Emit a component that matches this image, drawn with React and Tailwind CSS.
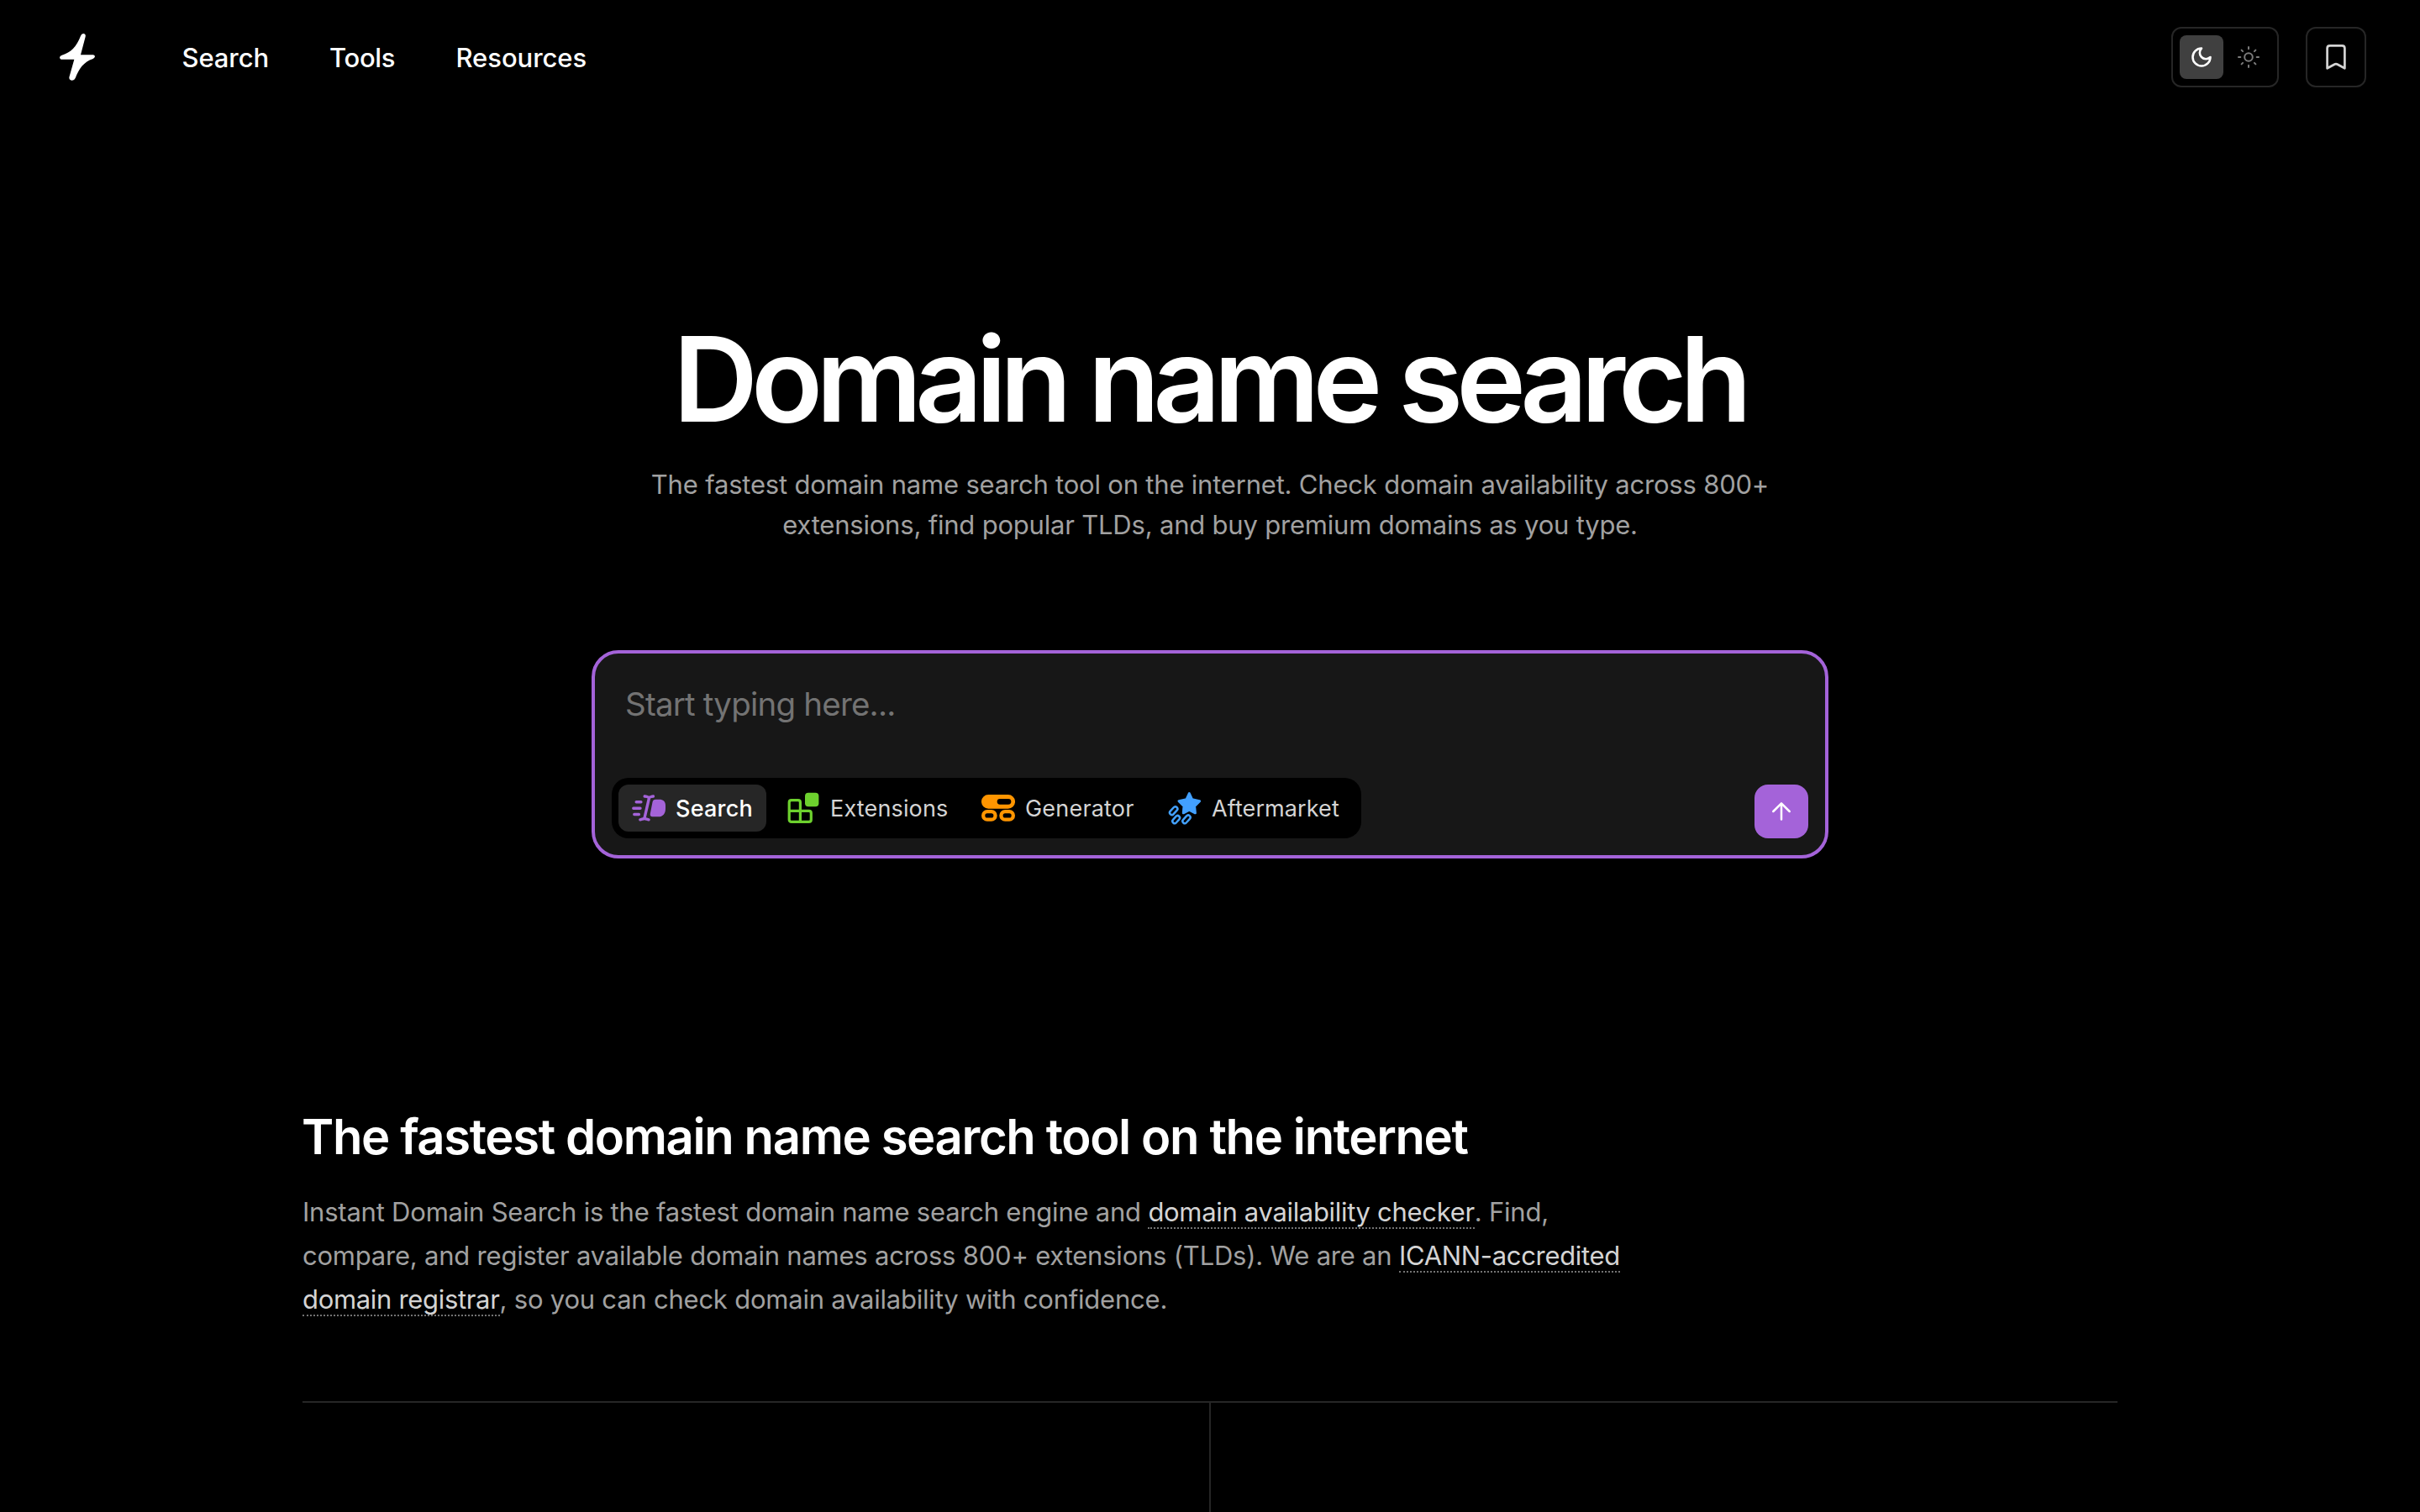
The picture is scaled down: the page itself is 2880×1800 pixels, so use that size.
import React, { useState } from "react";

const navLinks = [
  { label: "Search", className: "w-[175.5px] tracking-[-0.09px]" },
  { label: "Tools", className: "w-[150.5px] tracking-[-0.3px]" },
  { label: "Resources", className: "tracking-[-0.06px]" },
];

function Logo() {
  return (
    <svg viewBox="0 0 192 228" className="h-[76px] w-16" fill="#fff">
      <path d="M108 38Q111 29 119 30Q127 32 125 41L108 106H153Q159 107 159 112Q158 117 152 120C119 131 102 155 89 189Q85 198 76 197Q66 195 67 186L85 122H38Q33 121 33 115Q34 109 41 107C74 96 92 78 108 38Z" />
    </svg>
  );
}

function MoonIcon() {
  return (
    <svg viewBox="0 0 24 24" className="h-7 w-7" fill="none" stroke="#fff" strokeWidth="2.2" strokeLinecap="round" strokeLinejoin="round">
      <path d="M12 3a6 6 0 0 0 9 9 9 9 0 1 1-9-9Z" />
    </svg>
  );
}

function SunIcon() {
  return (
    <svg viewBox="-14 -14 28 28" className="h-7 w-7" fill="none" stroke="#7c7c7c" strokeWidth="2" strokeLinecap="round">
      <circle r="4.8" />
      <path d="M0-12V-9.7M0 12V9.7M-12 0H-9.7M12 0H9.7M-8.4-8.4L-6.9-6.9M8.4-8.4L6.9-6.9M-8.4 8.4L-6.9 6.9M8.4 8.4L6.9 6.9" />
    </svg>
  );
}

function BookmarkIcon() {
  return (
    <svg viewBox="0 0 24 30" className="h-[30px] w-6" fill="none" stroke="#d4d4d4" strokeWidth="2.7" strokeLinejoin="round">
      <path d="M4.7 1.4H19.3Q22.4 1.4 22.4 4.5V28.3L14 23.7Q12 22.6 10 23.7L1.6 28.3V4.5Q1.6 1.4 4.7 1.4Z" />
    </svg>
  );
}

function SearchIcon() {
  return (
    <svg viewBox="0 0 40 40" className="h-10 w-10" fill="none" stroke="#a463d9" strokeWidth="3.4" strokeLinecap="round" strokeLinejoin="round">
      <path d="M5.2 12.7H10.9M1.8 20.3H10M2.8 27.5H8.4" />
      <path d="M15.2 6L17.8 6.4Q20.5 8 23.2 6.4L25.4 6M20.5 8L15 31.8M9.9 33.8L12.3 33.2Q15 31.8 17.6 33.2L20 33.8" />
      <path d="M28.3 9.7H32.6C37.2 9.7 40 12.2 40 16.5V20.5C40 26.8 37 30.3 31.5 30.3H24.5C22.3 30.3 21.4 28.8 21.8 26.8L24.5 13C25 10.8 26.2 9.7 28.3 9.7Z" fill="#a463d9" stroke="none" />
    </svg>
  );
}

function ExtensionsIcon() {
  return (
    <svg viewBox="0 0 40 40" className="h-10 w-10" fill="none" stroke="#6dd12e" strokeWidth="3.2">
      <path d="M5.8 10.6H13.8Q16.4 10.6 16.4 13.2V23.4H26.6Q29.3 23.4 29.3 26V33.7Q29.3 36.4 26.6 36.4H5.8Q3.2 36.4 3.2 33.7V13.2Q3.2 10.6 5.8 10.6ZM3.2 23.4H16.4V36.4" />
      <rect x="22" y="1.8" width="16.4" height="16.4" rx="4" fill="#6dd12e" stroke="none" />
    </svg>
  );
}

function GeneratorIcon() {
  return (
    <svg viewBox="0 0 40 40" className="h-10 w-10" fill="none" stroke="#ff9500" strokeWidth="4.3">
      <path fillRule="evenodd" fill="#ff9500" stroke="none" d="M8.3 4H31.7A8.35 8.35 0 0 1 31.7 20.7H8.3A8.35 8.35 0 0 1 8.3 4ZM22 9A3.35 3.35 0 0 0 22 15.7H32A3.35 3.35 0 0 0 32 9Z" />
      <rect x="2.15" y="24.2" width="14.4" height="9.4" rx="4.7" />
      <rect x="23.45" y="24.2" width="14.4" height="9.4" rx="4.7" />
    </svg>
  );
}

function AftermarketIcon() {
  return (
    <svg viewBox="0 0 40 40" className="h-10 w-10" fill="none" stroke="#42a0ff" strokeWidth="2.5">
      <path
        fill="#42a0ff"
        strokeWidth="3"
        strokeLinejoin="round"
        d="M25.3 2.6L28.7 9.8 37.6 11.6 31.6 17.7 32.4 25.8 25.3 22.2 18.3 25.8 19 17.7 13 11.6 21.9 9.8Z"
      />
      <rect x="-5.6" y="-2.6" width="11.2" height="5.2" rx="2.6" transform="translate(6.7 23.2) rotate(-48)" />
      <rect x="-5.2" y="-2.6" width="10.4" height="5.2" rx="2.6" transform="translate(9.7 33.6) rotate(-48)" />
      <rect x="-5.6" y="-2.6" width="11.2" height="5.2" rx="2.6" transform="translate(22 33.3) rotate(-48)" />
    </svg>
  );
}

const tabs = [
  { id: "search", label: "Search", icon: SearchIcon, className: "w-44 font-medium tracking-[0.2px]" },
  { id: "extensions", label: "Extensions", icon: ExtensionsIcon, className: "w-56 tracking-[0.15px]" },
  { id: "generator", label: "Generator", icon: GeneratorIcon, className: "w-[214px] tracking-[0.2px]" },
  { id: "aftermarket", label: "Aftermarket", icon: AftermarketIcon, className: "w-[238px] tracking-[0.1px]" },
];

function Header() {
  return (
    <header className="flex h-34 items-center pr-16 pl-15">
      <Logo />
      <nav className="ml-[92.5px] flex flex-1 pt-0.5 text-[31px] leading-12 font-medium text-white">
        {navLinks.map((l) => (
          <a key={l.label} href="#" className={l.className}>{l.label}</a>
        ))}
      </nav>
      <div className="flex gap-8">
        <div className="flex h-18 w-32 items-center gap-1 rounded-xl border-2 border-[#262626] px-2">
          <button className="grid h-13 w-13 place-items-center rounded-lg bg-[#404040]">
            <MoonIcon />
          </button>
          <button className="grid h-13 w-13 place-items-center rounded-lg">
            <SunIcon />
          </button>
        </div>
        <button className="grid h-18 w-18 place-items-center rounded-xl border-2 border-[#262626]">
          <BookmarkIcon />
        </button>
      </div>
    </header>
  );
}

function SearchBox() {
  const [active, setActive] = useState("search");

  return (
    <div className="mt-[125px] flex h-62 w-[1472px] flex-col justify-between rounded-[32px] border-4 border-[#a463d9] bg-[#171717] p-5 pt-8">
      <input
        type="text"
        placeholder="Start typing here..."
        className="h-14 w-full bg-transparent pl-4 text-[38.5px] leading-14 tracking-[-0.8px] text-white outline-none placeholder:text-[#737373]"
      />
      <div className="flex items-end justify-between">
        <div className="flex gap-2 rounded-[20px] bg-black p-2">
          {tabs.map(({ id, label, icon: Icon, className }) => (
            <button
              key={id}
              onClick={() => setActive(id)}
              className={`flex h-14 items-center gap-3 rounded-xl pl-4 text-[27px] whitespace-nowrap ${className} ${
                active === id ? "bg-[#262626] text-white" : "text-[#d4d4d4]"
              }`}
            >
              <Icon />
              <span className="pt-0.5">{label}</span>
            </button>
          ))}
        </div>
        <button className="grid h-16 w-16 place-items-center rounded-2xl bg-[#a463d9]">
          <svg viewBox="0 0 24 24" className="h-6 w-6" fill="none" stroke="#fff" strokeWidth="2.5" strokeLinecap="round" strokeLinejoin="round">
            <path d="M12 21.6V2.4M2.3 12L12 2.4L21.7 12" />
          </svg>
        </button>
      </div>
    </div>
  );
}

function TextLink({ children }) {
  return (
    <a href="#" className="border-b-2 border-dotted border-[#737373] tracking-[-0.32px] text-[#d4d4d4]">{children}</a>
  );
}

export default function App() {
  return (
    <div className="flex h-[1800px] w-full flex-col overflow-hidden bg-black font-['Inter',sans-serif]">
      <Header />

      {/* Hero */}
      <section className="mt-[243px] flex flex-col items-center text-center">
        <h1 className="pr-0.5 text-[140px] leading-36 font-semibold tracking-[-8.1px] text-white">Domain name search</h1>
        <p className="mt-[30px] text-[31px] leading-12 tracking-[-0.2px] text-[#a1a1a1]">
          The fastest domain name search tool on the internet. Check domain availability across 800+
          <br />
          extensions, find popular TLDs, and buy premium domains as you type.
        </p>
      </section>
      <div className="flex justify-center">
        <SearchBox />
      </div>

      {/* About */}
      <section className="mx-auto mt-[295px] flex w-[2160px] flex-1 flex-col">
        <h2 className="-ml-px text-[58px] leading-18 font-semibold tracking-[-1.38px] text-white">
          The fastest domain name search tool on the internet
        </h2>
        <p className="mt-7 text-[31px] leading-[52px] tracking-[-0.22px] text-[#a1a1a1]">
          Instant Domain Search is the fastest domain name search engine and <TextLink>domain availability checker</TextLink>. Find,
          <br />
          compare, and register available domain names across 800+ extensions (TLDs). We are an{" "}
          <TextLink>
            ICANN-accredited
            <br />
            domain registrar
          </TextLink>
          , so you can check domain availability with confidence.
        </p>
        <div className="mt-[95px] grid flex-1 grid-cols-2 border-t-2 border-[#262626]">
          <div className="relative left-px border-r-2 border-[#262626]" />
          <div />
        </div>
      </section>
    </div>
  );
}
